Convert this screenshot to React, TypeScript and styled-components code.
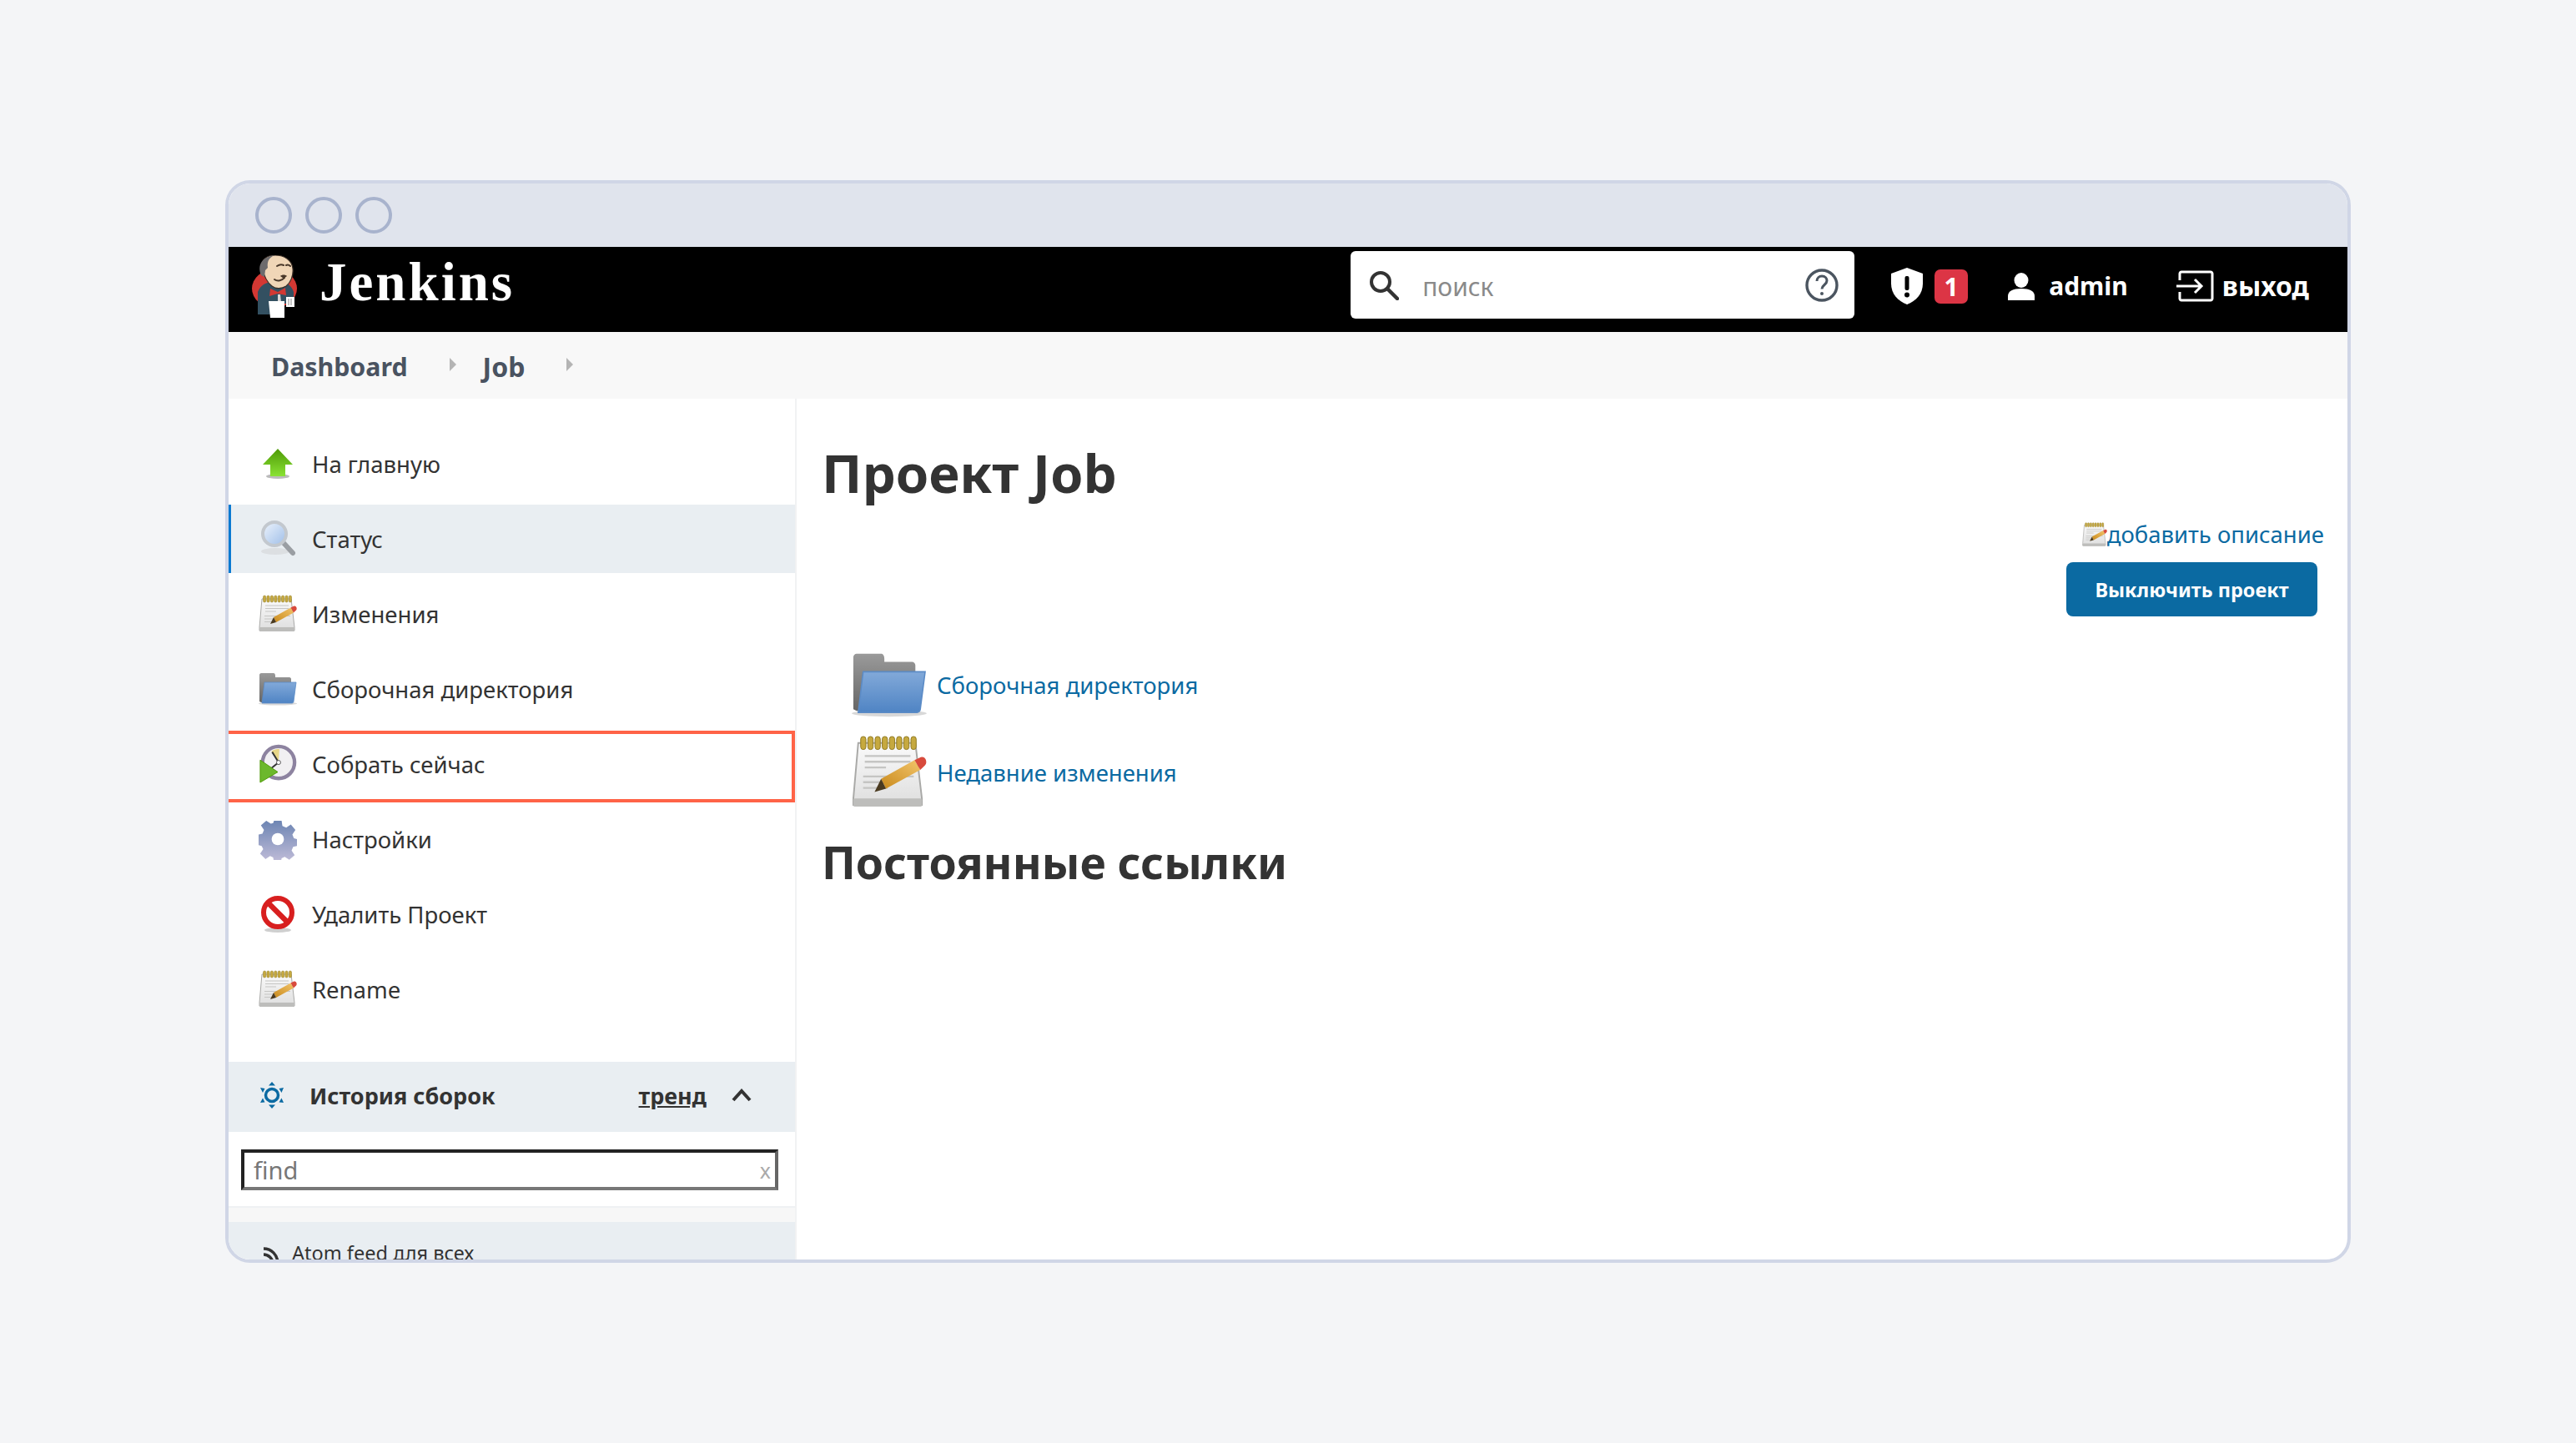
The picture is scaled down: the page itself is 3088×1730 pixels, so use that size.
import React from "react";
import styled, {createGlobalStyle} from "styled-components";

const GlobalStyle = createGlobalStyle`
  html, body {
    margin: 0;
    padding: 0;
    background: #f4f5f7;
  }
  * {
    box-sizing: border-box;
  }
`

const Page = styled.div`
  min-height: 100vh;
  display: flex;
  align-items: center;
  justify-content: center;
  font-family: "Noto Sans", "Open Sans", sans-serif;
  color: #333;
`
const Frame = styled.div`
  width: 2548px;
  height: 1298px;
  border: 4px solid #d0d6e6;
  border-radius: 30px;
  overflow: hidden;
  display: flex;
  flex-direction: column;
  background: #fff;
`
const TitleBar = styled.div`
  height: 76px;
  flex: none;
  background: #e0e4ed;
  display: flex;
  align-items: center;
  gap: 16px;
  padding: 0 0 0 32px;
`
const Dot = styled.span`
  width: 44px;
  height: 44px;
  border-radius: 50%;
  border: 4px solid #a8b3cd;
`
const Header = styled.header`
  height: 102px;
  flex: none;
  background: #000;
  display: flex;
  align-items: center;
  padding: 0 46px 8px 28px;
  color: #fff;
`
const Brand = styled.div`
  display: flex;
  align-items: center;
  gap: 27px;
  margin-right: auto;
`
const BrandName = styled.span`
  font-family: "Liberation Serif", serif;
  font-weight: 700;
  font-size: 65px;
  line-height: 1;
  letter-spacing: 3px;
  position: relative;
  top: -5px;
`
const SearchBox = styled.div`
  width: 604px;
  height: 81px;
  background: #fff;
  border-radius: 6px;
  display: flex;
  align-items: center;
  padding: 0 19px 0 22px;
  margin-right: 44px;
  margin-top: -3px;
`
const SearchText = styled.span`
  flex: 1;
  margin-left: 28px;
  font-size: 30px;
  color: #8a8a8a;
  position: relative;
  top: 2px;
`
const Badge = styled.span`
  width: 40px;
  height: 41px;
  margin-left: 14px;
  margin-right: 48px;
  border-radius: 7px;
  background: #dc3545;
  color: #fff;
  font-weight: 700;
  font-size: 30px;
  display: flex;
  align-items: center;
  justify-content: center;
`
const HeaderLink = styled.span<{$gap: number; $mr?: number; $size: number}>`
  display: flex;
  align-items: center;
  gap: ${p => p.$gap}px;
  margin-right: ${p => p.$mr ?? 0}px;
  font-weight: 700;
  font-size: ${p => p.$size}px;
  line-height: 1;
`
const Crumbs = styled.nav`
  height: 80px;
  flex: none;
  background: #f8f8f8;
  display: flex;
  align-items: center;
  padding: 2px 0 0 51px;
  font-weight: 700;
  color: #4a5361;
`
const Crumb = styled.span<{$size: number}>`
  font-size: ${p => p.$size}px;
`
const CrumbArrow = styled.i<{$ml: number; $mr: number}>`
  width: 0;
  height: 0;
  margin: -4px ${p => p.$mr}px 0 ${p => p.$ml}px;
  border-left: 8px solid #b4b4b4;
  border-top: 8px solid transparent;
  border-bottom: 8px solid transparent;
`
const Body = styled.div`
  flex: 1;
  min-height: 0;
  display: flex;
`
const Sidebar = styled.aside`
  width: 681px;
  flex: none;
  border-right: 2px solid #f1f2f3;
  display: flex;
  flex-direction: column;
`
const Tasks = styled.div`
  padding-top: 37px;
  display: flex;
  flex-direction: column;
  gap: 8px;
`
const Task = styled.div<{$active?: boolean; $marked?: boolean}>`
  position: relative;
  height: 82px;
  display: flex;
  align-items: center;
  gap: 18px;
  padding-left: 36px;
  font-size: 27.5px;
  background: ${p => (p.$active ? "#e9eef2" : "transparent")};
  box-shadow: ${p => (p.$active ? "inset 3px 0 0 #0b7ad1" : "none")};

  &::after {
    content: "";
    display: ${p => (p.$marked ? "block" : "none")};
    position: absolute;
    inset: 1px 0 -5px -4px;
    border: 4px solid #ff6347;
    z-index: 2;
  }
`
const IconSlot = styled.span`
  width: 46px;
  height: 46px;
  flex: none;
  display: flex;
  align-items: center;
  justify-content: center;
`
const HistoryHead = styled.div`
  height: 84px;
  flex: none;
  margin-top: 46px;
  background: #e9eef2;
  display: flex;
  align-items: center;
  padding: 0 0 4px 37px;
  font-weight: 700;
  font-size: 27px;
`
const HistoryTitle = styled.span`
  margin-left: 30px;
  margin-right: auto;
`
const TrendLink = styled.span`
  text-decoration: underline;
  margin-right: 30px;
`
const Chevron = styled.svg`
  margin-right: 52px;
`
const FindWrap = styled.div`
  height: 91px;
  flex: none;
  padding: 21px 20px 0 15px;
  border-bottom: 2px solid #eef1f3;
`
const FindBox = styled.div`
  height: 49px;
  border: 4px solid #222;
  border-bottom-color: #777;
  border-right-color: #666;
  display: flex;
  align-items: center;
  justify-content: space-between;
  padding: 0 5px 0 11px;
  font-size: 29px;
  color: #777;
`
const FindClear = styled.span`
  font-size: 25px;
  color: #aaa;
`
const Spacer = styled.div`
  height: 17px;
  flex: none;
  background: #f7f7f7;
`
const Feeds = styled.div`
  flex: 1;
  background: #e9eef2;
  display: flex;
  align-items: flex-start;
  gap: 15px;
  padding: 21px 0 0 41px;
  font-size: 23.5px;
  line-height: 33px;
`
const Main = styled.main`
  flex: 1;
  padding: 46px 28px 0 30px;
  display: flex;
  flex-direction: column;
`
const Title = styled.h1`
  margin: 0;
  font-size: 63.5px;
  font-weight: 700;
  line-height: 86px;
`
const Actions = styled.div`
  display: flex;
  flex-direction: column;
  align-items: flex-end;
  margin-top: 12px;
`
const Describe = styled.a`
  display: flex;
  align-items: center;
  color: #0b6aa2;
  font-size: 27.5px;
  line-height: 38px;
  margin-bottom: 14px;
`
const Disable = styled.button`
  width: 301px;
  height: 65px;
  margin-right: 8px;
  border: 0;
  border-radius: 8px;
  background: #0b6aa2;
  color: #fff;
  font-family: inherit;
  font-size: 23.5px;
  font-weight: 700;
`
const Links = styled.div`
  margin-top: 43px;
  padding-left: 36px;
  display: flex;
  flex-direction: column;
  gap: 20px;
`
const LinkRow = styled.a<{$h: number}>`
  height: ${p => p.$h}px;
  display: flex;
  align-items: center;
  gap: 12px;
  color: #0b6aa2;
  font-size: 27.5px;
`
const Subtitle = styled.h2`
  margin: 24px 0 0;
  font-size: 53.5px;
  font-weight: 700;
  line-height: 76px;
`

const Logo = () => (
    <svg width="54" height="75" viewBox="0 0 54 75">
        <ellipse cx="27" cy="40" rx="27" ry="23" fill="#d33833"/>
        <path d="M7 75V48c3-8 10-12 18-12h10c7 0 13 5 15 12v14H38v13z" fill="#335061" transform="translate(0,-4)"/>
        <path d="M12 14C11 5 18 0 28 0c11 0 20 6 21 16 1 9-3 17-8 21-5 3-12 4-17 0-5-4-10-13-12-23z" fill="#f0d6b7" stroke="#3a2e26" strokeWidth="1.200"/>
        <path d="M11 24C6 12 12 2 27 0c-7 3-9 8-8 15l-3 3-1 8z" fill="#6d6b6d"/>
        <path d="M30 13c3-2 6-2 8-1M41 12c2-1 4 0 5 1M27 29c4 3 9 1 12-2" stroke="#49382a" strokeWidth="2" fill="none" strokeLinecap="round"/>
        <path d="M34 25c2-2 6-2 8 0l-4 3z" fill="#49382a"/>
        <path d="M22 40l9 4 9-5 1 9-10-2-10 3z" fill="#d33833"/>
        <path d="M31 47l3 0 1 10h-4z" fill="#dcd9d8"/>
        <path d="M20 55h19v20H22z" fill="#fff"/>
        <path d="M41 50h10v12H41z" fill="#fff"/>
        <path d="M44 52v8M47 52v8" stroke="#888" strokeWidth="1"/>
    </svg>
)

const Arrow = () => (
    <svg width="38" height="38" viewBox="0 0 38 38">
        <defs>
            <linearGradient id="upGreen" x1="0" y1="0" x2="0" y2="1">
                <stop offset="0" stopColor="#4e9a06"/>
                <stop offset="1" stopColor="#8ae234"/>
            </linearGradient>
        </defs>
        <ellipse cx="19" cy="34" rx="14" ry="3" fill="#bbb"/>
        <path d="M19 1L37 20H28V34H10V20H1z" fill="url(#upGreen)"/>
    </svg>
)

const Lens = () => (
    <svg width="46" height="46" viewBox="0 0 46 46">
        <defs>
            <linearGradient id="lensGlass" x1="0" y1="0" x2="1" y2="1">
                <stop offset="0" stopColor="#eef4fc"/>
                <stop offset="1" stopColor="#9dbde8"/>
            </linearGradient>
        </defs>
        <ellipse cx="20" cy="38" rx="17" ry="4" fill="#dcdfe2"/>
        <path d="M30 28L41 40" stroke="#9a9ea3" strokeWidth="6" strokeLinecap="round"/>
        <circle cx="19" cy="17" r="14" fill="url(#lensGlass)" stroke="#c3c8ce" strokeWidth="4"/>
    </svg>
)

const rings = [7, 11.400, 15.800, 20.200, 24.600, 29, 33.400, 37.800]

const Notepad = ({size = 46}: {size?: number}) => (
    <svg width={size} height={size} viewBox="0 0 46 46">
        <defs>
            <linearGradient id="padPencil" x1="0" y1="1" x2="1" y2="0">
                <stop offset="0" stopColor="#c98a1c"/>
                <stop offset="1" stopColor="#f2c46a"/>
            </linearGradient>
            <linearGradient id="padPage" x1="0" y1="0" x2="0" y2="1">
                <stop offset="0" stopColor="#fafafa"/>
                <stop offset="1" stopColor="#dedede"/>
            </linearGradient>
        </defs>
        <path d="M1 39L4 5H39L43 39V43H1z" fill="url(#padPage)" stroke="#a9a9a7" strokeWidth="1"/>
        <rect x="1" y="39" width="42" height="5" rx="1" fill="#bdbdbb"/>
        {rings.map(x => (
            <rect key={x} x={x - 1.500} y="1" width="3.200" height="8" rx="1.600" fill="#c6a93f" stroke="#8f7a24" strokeWidth="0.500"/>
        ))}
        <path d="M8 13H36M8 16.500H36M8 20H21M7 25.500H38M7 29H27M7 32.500H22" stroke="#c5c5c3" strokeWidth="1.200"/>
        <path d="M18 27L38.500 15.500L42 21.500L21 33z" fill="url(#padPencil)"/>
        <path d="M38.500 15.500l3-1.500c2-1 3.500 0 4 1.500 .5 1.800 0 3-1.500 4l-2 2z" fill="#d84a3c"/>
        <path d="M14 35l4-8 3 6z" fill="#4a3a20"/>
    </svg>
)

const Folder = ({size = 46}: {size?: number}) => (
    <svg width={size} height={size} viewBox="0 0 46 40">
        <defs>
            <linearGradient id="folderBlue" x1="0" y1="0" x2="0" y2="1">
                <stop offset="0" stopColor="#82a9d9"/>
                <stop offset="1" stopColor="#4f84c4"/>
            </linearGradient>
            <linearGradient id="folderGrey" x1="0" y1="0" x2="0" y2="1">
                <stop offset="0" stopColor="#9a9a9a"/>
                <stop offset="1" stopColor="#666"/>
            </linearGradient>
        </defs>
        <ellipse cx="23" cy="37.500" rx="23" ry="2" fill="#d8d8d8"/>
        <path d="M1 3c0-1 1-2 2-2h15c1 0 2 1 2 3v2h17c1 0 2 1 2 2v28H3l-2-1z" fill="url(#folderGrey)"/>
        <path d="M7 12H45L42 35c0 1-1 2-2 2H4z" fill="url(#folderBlue)" stroke="#5b8bc6" strokeWidth="0.800"/>
    </svg>
)

const BuildClock = () => (
    <svg width="48" height="50" viewBox="0 0 48 50">
        <circle cx="25" cy="23" r="20" fill="#f1f0f2" stroke="#8d83a0" strokeWidth="4.500"/>
        <path d="M25 22L16 9c3-2 7-3 10-3z" fill="#e8d788"/>
        <path d="M25 23L17 10M25 23L15 31" stroke="#333" strokeWidth="2"/>
        <circle cx="25" cy="23" r="2.600" fill="#fff" stroke="#555" strokeWidth="1"/>
        <path d="M2 20L24 35 2 48z" fill="#6cb82c" stroke="#4e9a06" strokeWidth="1"/>
    </svg>
)

const Gear = () => (
    <svg width="50" height="50" viewBox="0 0 50 50">
        <defs>
            <linearGradient id="gearFill" x1="0" y1="0" x2="0" y2="1">
                <stop offset="0" stopColor="#6d85b3"/>
                <stop offset="1" stopColor="#c0bcd8"/>
            </linearGradient>
        </defs>
        <path d="M20 1h10l1 7 5 2 6-4 6 7-4 6 2 5 4 1v9l-5 1-2 5 4 6-7 6-6-4-4 2-1 5H20l-1-6-4-2-6 4-7-7 4-6-2-4-4-1V19l5-1 2-5-4-6 7-6 6 4 3-1z" fill="url(#gearFill)"/>
        <circle cx="25" cy="25" r="8" fill="#fff"/>
    </svg>
)

const NoEntry = () => (
    <svg width="44" height="46" viewBox="0 0 44 46">
        <ellipse cx="22" cy="42" rx="16" ry="3" fill="#cfcfcf"/>
        <circle cx="22" cy="21" r="17" fill="#fff" stroke="#d81f1f" strokeWidth="6"/>
        <path d="M10 9L34 33" stroke="#d81f1f" strokeWidth="6.500"/>
    </svg>
)

const SearchGlass = () => (
    <svg width="36" height="36" viewBox="0 0 36 36">
        <circle cx="14" cy="14" r="11" fill="none" stroke="#333" strokeWidth="4"/>
        <path d="M22 22L34 34" stroke="#333" strokeWidth="4.500" strokeLinecap="round"/>
    </svg>
)

const HelpCircle = () => (
    <svg width="40" height="40" viewBox="0 0 40 40">
        <circle cx="20" cy="20" r="18" fill="none" stroke="#4b5560" strokeWidth="3.400"/>
        <path d="M14 15c0-4 3-6 6-6 4 0 6 3 6 5.500 0 5-6 5-6 10" fill="none" stroke="#4b5560" strokeWidth="3"/>
        <circle cx="20" cy="30" r="2" fill="#4b5560"/>
    </svg>
)

const Shield = () => (
    <svg width="38" height="44" viewBox="0 0 38 44">
        <path d="M19 0l19 7v12c0 12-8 21-19 25C8 40 0 31 0 19V7z" fill="#fff"/>
        <rect x="16.500" y="10" width="5" height="17" rx="2" fill="#000"/>
        <circle cx="19" cy="32.500" r="3" fill="#000"/>
    </svg>
)

const Person = () => (
    <svg width="32" height="33" viewBox="0 0 32 33">
        <ellipse cx="16" cy="9" rx="8.500" ry="9" fill="#fff"/>
        <path d="M0 33v-5c0-6 6-9 16-9s16 3 16 9v5z" fill="#fff"/>
    </svg>
)

const Logout = () => (
    <svg width="45" height="38" viewBox="0 0 45 38">
        <path d="M4 12V4c0-1 1-2 2-2h35c1 0 2 1 2 2v30c0 1-1 2-2 2H6c-1 0-2-1-2-2v-8" fill="none" stroke="#fff" strokeWidth="3"/>
        <path d="M0 19H30M22 11l8 8-8 8" fill="none" stroke="#fff" strokeWidth="3"/>
    </svg>
)

const HistoryIcon = () => (
    <svg width="30" height="32" viewBox="0 0 30 32">
        <circle cx="15" cy="16" r="7.500" fill="none" stroke="#0b6aa2" strokeWidth="3.500"/>
        <path d="M15 0l4 4.500h-8zM15 32l-4-4.500h8zM1 7l5.500 1-2.500 5zM29 7l-2.500 6-3-5zM1 25l3-5.500 2.500 5zM29 25l-5.500-.5 3-5z" fill="#0b6aa2"/>
    </svg>
)

const RssIcon = styled.svg`
  margin-top: 7px;
  flex: none;
`

const Rss = () => (
    <RssIcon width="20" height="24" viewBox="0 0 20 24">
        <path d="M1 4c9 0 17 7 17 18M1 11c6 0 11 5 11 11" fill="none" stroke="#333" strokeWidth="3.500"/>
        <circle cx="4" cy="20" r="3" fill="#333"/>
    </RssIcon>
)

const tasks: {label: string; icon: React.ReactNode; active?: boolean; marked?: boolean}[] = [
    {label: "На главную", icon: <Arrow/>},
    {label: "Статус", icon: <Lens/>, active: true},
    {label: "Изменения", icon: <Notepad/>},
    {label: "Сборочная директория", icon: <Folder/>},
    {label: "Собрать сейчас", icon: <BuildClock/>, marked: true},
    {label: "Настройки", icon: <Gear/>},
    {label: "Удалить Проект", icon: <NoEntry/>},
    {label: "Rename", icon: <Notepad/>},
]

export default function App() {
    return (
        <Page>
            <GlobalStyle/>
            <Frame>
                <TitleBar>
                    <Dot/>
                    <Dot/>
                    <Dot/>
                </TitleBar>
                <Header>
                    <Brand>
                        <Logo/>
                        <BrandName>Jenkins</BrandName>
                    </Brand>
                    <SearchBox>
                        <SearchGlass/>
                        <SearchText>поиск</SearchText>
                        <HelpCircle/>
                    </SearchBox>
                    <Shield/>
                    <Badge>1</Badge>
                    <HeaderLink $size={30} $gap={17} $mr={58}><Person/>admin</HeaderLink>
                    <HeaderLink $size={32} $gap={10}><Logout/>выход</HeaderLink>
                </Header>
                <Crumbs>
                    <Crumb $size={30.3}>Dashboard</Crumb>
                    <CrumbArrow $ml={50} $mr={32}/>
                    <Crumb $size={32}>Job</Crumb>
                    <CrumbArrow $ml={50} $mr={0}/>
                </Crumbs>
                <Body>
                    <Sidebar>
                        <Tasks>
                            {tasks.map(t => (
                                <Task key={t.label} $active={t.active} $marked={t.marked}>
                                    <IconSlot>{t.icon}</IconSlot>
                                    {t.label}
                                </Task>
                            ))}
                        </Tasks>
                        <HistoryHead>
                            <HistoryIcon/>
                            <HistoryTitle>История сборок</HistoryTitle>
                            <TrendLink>тренд</TrendLink>
                            <Chevron width="24" height="16" viewBox="0 0 24 16">
                                <path d="M2 14L12 3l10 11" fill="none" stroke="#333" strokeWidth="4"/>
                            </Chevron>
                        </HistoryHead>
                        <FindWrap>
                            <FindBox>
                                find
                                <FindClear>x</FindClear>
                            </FindBox>
                        </FindWrap>
                        <Spacer/>
                        <Feeds>
                            <Rss/>
                            Atom feed для всех
                        </Feeds>
                    </Sidebar>
                    <Main>
                        <Title>Проект Job</Title>
                        <Actions>
                            <Describe><Notepad size={30}/>добавить описание</Describe>
                            <Disable>Выключить проект</Disable>
                        </Actions>
                        <Links>
                            <LinkRow $h={78}><Folder size={90}/>Сборочная директория</LinkRow>
                            <LinkRow $h={92}><Notepad size={90}/>Недавние изменения</LinkRow>
                        </Links>
                        <Subtitle>Постоянные ссылки</Subtitle>
                    </Main>
                </Body>
            </Frame>
        </Page>
    )
}
